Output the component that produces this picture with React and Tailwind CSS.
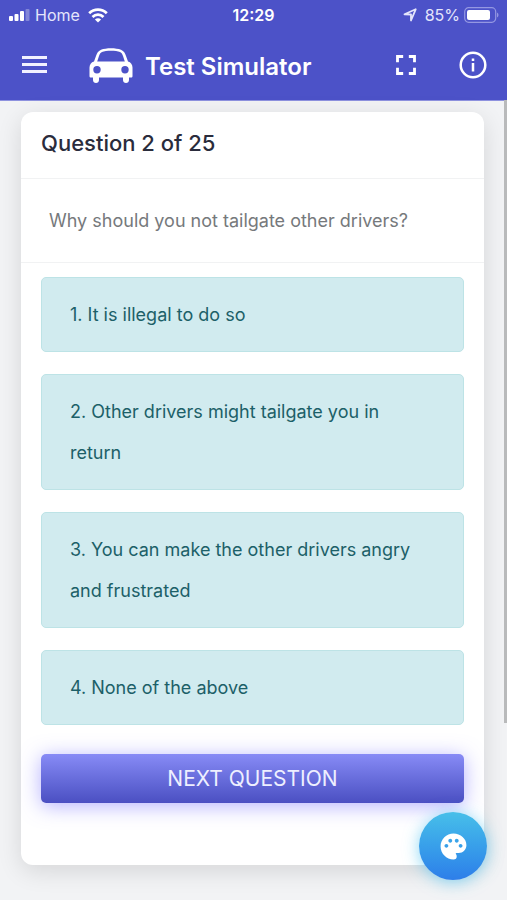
import React from 'react';
import { MdFullscreen, MdPalette } from 'react-icons/md';

const ANSWERS = [
  'It is illegal to do so',
  'Other drivers might tailgate you in return',
  'You can make the other drivers angry and frustrated',
  'None of the above',
];

function StatusBar() {
  return (
    <div className="grid h-[30px] grid-cols-3 items-center pl-2 pr-2 text-[16px] leading-5 text-[#e4e5fb]">
      <div className="flex items-center gap-1">
        <svg className="h-3 w-[23px]" viewBox="0 0 23 12" fill="#fff" aria-hidden="true">
          <rect x="1" y="7" width="4" height="5" rx="1" />
          <rect x="6.500" y="5" width="4" height="7" rx="1" />
          <rect x="12" y="2" width="4" height="10" rx="1" />
          <rect x="17.500" y="0" width="4" height="12" rx="1" opacity="0.3" />
        </svg>
        <span>Home</span>
        <svg className="ml-1 h-[15px] w-5" viewBox="0 0 20 15" fill="none" stroke="#fff" strokeWidth="2.800" aria-hidden="true">
          <path d="M1.200 5.200C6.200 .4 13.800 .4 18.800 5.200" />
          <path d="M4.500 8.900C7.600 5.900 12.400 5.900 15.500 8.900" />
          <path d="M10 14.500 6.900 11.400C8.600 9.800 11.400 9.800 13.100 11.400Z" fill="#fff" stroke="none" />
        </svg>
      </div>
      <span className="justify-self-center font-semibold text-white">12:29</span>
      <div className="flex items-center justify-end gap-1">
        <svg className="mr-1 h-[14px] w-[14px]" viewBox="0 0 14 14" fill="none" stroke="#e4e5fb" strokeWidth="1.800" strokeLinejoin="round" aria-hidden="true">
          <path d="M12.700 1.300 8 12.500V6.500L1.500 6.300Z" />
        </svg>
        <span>85%</span>
        <svg className="h-4 w-[35px] shrink-0" viewBox="0 0 35 16" aria-hidden="true">
          <rect x="0.700" y="0.700" width="31" height="14.600" rx="4" fill="none" stroke="#9497e2" strokeWidth="1.200" />
          <rect x="3" y="3" width="23" height="10" rx="2" fill="#fff" />
          <path d="M33 5.500C35 6.500 35 9.500 33 10.500Z" fill="#9497e2" />
        </svg>
      </div>
    </div>
  );
}

function CarIcon() {
  return (
    <svg className="h-[35px] w-11 shrink-0" viewBox="0 0 44 35" fill="#fff" aria-hidden="true">
      <path
        fillRule="evenodd"
        d="M12 1.800C17 -.2 27 -.2 32 1.800C35 3 36 5.500 37 8L39 13.500C41.800 14.200 43.500 16.500 43.500 19.500V28C43.500 29 43 29.500 42 29.500H40V32C40 34 38.700 35 37 35S34 34 34 32V29.500H10V32C10 34 8.700 35 7 35S4 34 4 32V29.500H2C1 29.500 .5 29 .5 28V19.500C.5 16.500 2.200 14.200 5 13.500L7 8C8 5.500 9 3 12 1.800ZM13 4C11.300 4.700 10.700 6.200 10 8L8.200 13.500H35.800L34 8C33.300 6.200 32.700 4.700 31 4C27 2.400 17 2.400 13 4ZM8 18A3.700 3.700 0 1 0 8 25.400A3.700 3.700 0 1 0 8 18ZM36 18A3.700 3.700 0 1 0 36 25.400A3.700 3.700 0 1 0 36 18Z"
      />
    </svg>
  );
}

function Toolbar() {
  return (
    <div className="flex h-[70px] items-center pl-[22px] pr-5 text-white">
      <button type="button" aria-label="Menu" className="h-[25px] w-[25px]">
        <svg className="h-[25px] w-[25px]" viewBox="0 0 25 25" fill="#f1f1ff" aria-hidden="true">
          <rect y="3" width="25" height="3" />
          <rect y="10" width="25" height="3" />
          <rect y="17" width="25" height="3" />
        </svg>
      </button>
      <div className="ml-[42px] flex items-center gap-3">
        <CarIcon />
        <h1 className="mt-1 whitespace-nowrap text-[24px] font-semibold leading-8">Test Simulator</h1>
      </div>
      <div className="ml-auto flex items-center gap-9 pb-px">
        <button type="button" aria-label="Full screen">
          <MdFullscreen className="h-[34px] w-[34px]" />
        </button>
        <button type="button" aria-label="Information">
          <svg className="h-7 w-7" viewBox="0 0 28 28" fill="none" stroke="#fff" strokeWidth="2.500" aria-hidden="true">
            <circle cx="14" cy="14" r="12.300" />
            <path d="M14 12V20.500M14 7.500V10" />
          </svg>
        </button>
      </div>
    </div>
  );
}

export default function App() {
  return (
    <div className="relative min-h-screen bg-[#f2f3f5] pb-[35px] font-['Inter','Liberation_Sans',sans-serif]">
      <header className="border-b border-[#8e92df] bg-[#4c52c8]">
        <StatusBar />
        <Toolbar />
      </header>

      <main className="pl-[21px] pr-[23px] pt-[11px]">
        <section className="rounded-xl bg-white pb-[62px] shadow-[0_6px_24px_rgba(0,0,0,0.12)]">
          <h2 className="border-b border-[#f1f2f3] px-5 pb-[19px] pt-4 text-[22px] font-medium leading-[31px] text-[#2a2c3c]">
            Question 2 of 25
          </h2>
          <p className="border-b border-[#f1f2f3] px-7 py-[26px] text-[18px] leading-[31px] text-[#76797c]">
            Why should you not tailgate other drivers?
          </p>

          <div className="px-5 pt-[14px]">
            <ol className="flex flex-col gap-[22px]">
              {ANSWERS.map((answer, index) => (
                <li key={answer}>
                  <button
                    type="button"
                    className="block w-full rounded-[5px] border border-[#bde3e6] bg-[#d1ebef] px-7 py-4 text-left text-[18px] leading-[41px] text-[#1c6068]"
                  >
                    {`${index + 1}. ${answer}`}
                  </button>
                </li>
              ))}
            </ol>
            <button
              type="button"
              className="mt-[29px] block h-[49px] w-full rounded-[5px] bg-linear-to-b from-[#888bf6] to-[#4b4fc2] text-[21px] leading-8 text-[#eeefff] shadow-[0_3px_20px_rgba(108,99,255,0.5)]"
            >
              NEXT QUESTION
            </button>
          </div>
        </section>
      </main>

      {/* Scroll indicator */}
      <div className="absolute right-0 top-[100px] h-[623px] w-[3px] bg-[#b9babb]" />

      <button
        type="button"
        aria-label="Change theme"
        className="fixed bottom-5 right-5 flex h-[68px] w-[68px] items-center justify-center rounded-full bg-linear-to-b from-[#48bfe9] to-[#2e7ee9] text-white shadow-[0_2px_16px_rgba(60,190,240,0.6)]"
      >
        <MdPalette className="h-[31px] w-[31px]" />
      </button>
    </div>
  );
}
